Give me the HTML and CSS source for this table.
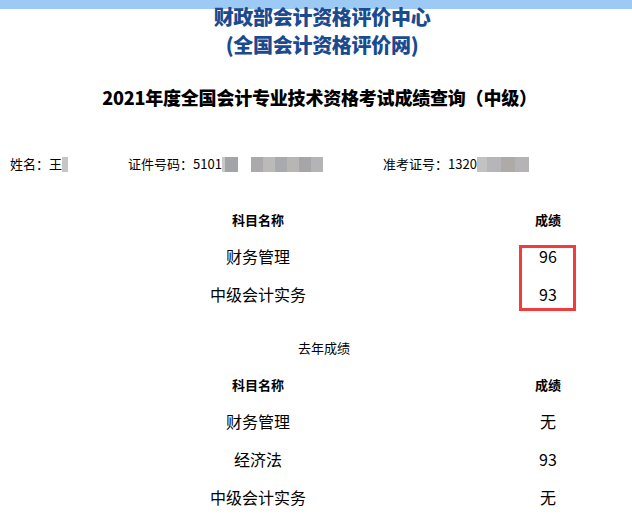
FILE: index.html
```html
<!DOCTYPE html>
<html lang="zh-CN">
<head>
<meta charset="utf-8">
<title>成绩查询</title>
<link rel="stylesheet" href="styles.css">
</head>
<body>
<header class="masthead">
  <div class="org">财政部会计资格评价中心</div>
  <div class="org">(全国会计资格评价网)</div>
</header>
<h1 class="title">2021年度全国会计专业技术资格考试成绩查询（中级）</h1>
<div class="info">
  <div class="field f-name">姓名：王<span class="blur b-name"></span></div>
  <div class="field f-id">证件号码：5101<span class="blur b-id1"></span><span class="blur b-id2"></span></div>
  <div class="field f-no">准考证号：1320<span class="blur b-no"></span></div>
</div>
<section class="scores current">
  <div class="row head"><div class="c1">科目名称</div><div class="c2">成绩</div></div>
  <div class="row"><div class="c1">财务管理</div><div class="c2">96</div></div>
  <div class="row"><div class="c1">中级会计实务</div><div class="c2">93</div></div>
  <div class="highlight"></div>
</section>
<div class="caption">去年成绩</div>
<section class="scores last">
  <div class="row head"><div class="c1">科目名称</div><div class="c2">成绩</div></div>
  <div class="row"><div class="c1">财务管理</div><div class="c2">无</div></div>
  <div class="row"><div class="c1">经济法</div><div class="c2">93</div></div>
  <div class="row"><div class="c1">中级会计实务</div><div class="c2">无</div></div>
</section>
</body>
</html>
```
FILE: styles.css
```css
html, body {
  margin: 0;
  padding: 0;
  background: #fff;
}
body {
  font-family: "Noto Sans CJK SC", "Microsoft YaHei", sans-serif;
  color: #000;
  width: 632px;
  overflow: hidden;
}
.masthead {
  padding-top: 3px;
  background: linear-gradient(#9dcaf4 0, #9dcaf4 9px, #fff 9px);
}
.org {
  text-align: center;
  color: #1a4a90;
  font-size: 20px;
  font-weight: 900;
  line-height: 28px;
  margin-left: 12px;
  letter-spacing: -0.3px;
}
.title {
  margin: 25px 0 0;
  text-align: center;
  font-size: 18px;
  font-weight: 900;
  line-height: 26px;
  margin-left: 7px;
  letter-spacing: -0.2px;
}
.info {
  display: flex;
  margin-top: 44px;
  font-size: 13px;
  line-height: 20px;
  height: 20px;
}
.field {
  display: flex;
  align-items: center;
  white-space: nowrap;
}
.f-name {
  width: 128px;
  padding-left: 10px;
  box-sizing: border-box;
}
.f-id {
  width: 255px;
}
.blur {
  display: inline-block;
  height: 15px;
}
.b-name {
  width: 6px;
  background: #c6c6c6;
}
.b-id1 {
  width: 16px;
  background: linear-gradient(90deg, #c8c8c8 0 3px, #a2a4a8 3px);
}
.b-id2 {
  width: 72px;
  margin-left: 13px;
  background: linear-gradient(90deg, #aaaaac 0 12px, #bcbab8 12px 24px, #a9aaad 24px 36px, #b7b6b4 36px 48px, #a6a6a8 48px 60px, #b4b4b6 60px);
}
.b-no {
  width: 52px;
  background: linear-gradient(90deg, #c2c2c2 0 10px, #b6b6b8 10px 24px, #aeaaa8 24px 38px, #b4b4b6 38px);
}
.scores {
  position: relative;
}
.current {
  margin-top: 27px;
}
.row {
  display: grid;
  grid-template-columns: 516px 64px;
  height: 38px;
  align-items: center;
  font-size: 16px;
}
.row .c1, .row .c2 {
  text-align: center;
}
.row.head {
  height: 36px;
  font-size: 13px;
  font-weight: bold;
}
.highlight {
  position: absolute;
  left: 519px;
  top: 44px;
  width: 51px;
  height: 60px;
  border: 3px solid #f03c3c;
}
.caption {
  margin-top: 25px;
  padding-left: 298px;
  font-size: 13px;
  line-height: 20px;
}
.last {
  margin-top: 8px;
}
```
